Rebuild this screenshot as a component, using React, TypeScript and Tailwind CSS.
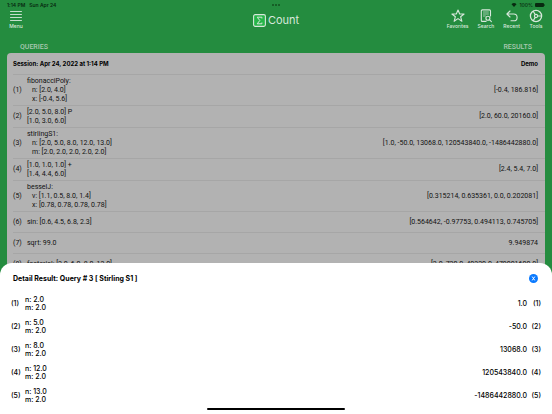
import type { ReactNode } from 'react'

type Query = { lines: string[]; indent?: boolean; result: string }

const queries: Query[] = [
  { lines: ['fibonacciPoly:', 'n: [2.0, 4.0]', 'x: [-0.4, 5.6]'], indent: true, result: '[-0.4, 186.816]' },
  { lines: ['[2.0, 5.0, 8.0] P', '[1.0, 3.0, 6.0]'], result: '[2.0, 60.0, 20160.0]' },
  {
    lines: ['stirlingS1:', 'n: [2.0, 5.0, 8.0, 12.0, 13.0]', 'm: [2.0, 2.0, 2.0, 2.0, 2.0]'],
    indent: true,
    result: '[1.0, -50.0, 13068.0, 120543840.0, -1486442880.0]',
  },
  { lines: ['[1.0, 1.0, 1.0] +', '[1.4, 4.4, 6.0]'], result: '[2.4, 5.4, 7.0]' },
  {
    lines: ['besselJ:', 'v: [1.1, 0.5, 8.0, 1.4]', 'x: [0.78, 0.78, 0.78, 0.78]'],
    indent: true,
    result: '[0.315214, 0.635361, 0.0, 0.202081]',
  },
  { lines: ['sin: [0.6, 4.5, 6.8, 2.3]'], result: '[0.564642, -0.97753, 0.494113, 0.745705]' },
  { lines: ['sqrt: 99.0'], result: '9.949874' },
  { lines: ['factorial: [2.0, 6.0, 8.0, 12.0]'], result: '[2.0, 720.0, 40320.0, 479001600.0]' },
]

const details = [
  { n: '2.0', m: '2.0', value: '1.0' },
  { n: '5.0', m: '2.0', value: '-50.0' },
  { n: '8.0', m: '2.0', value: '13068.0' },
  { n: '12.0', m: '2.0', value: '120543840.0' },
  { n: '13.0', m: '2.0', value: '-1486442880.0' },
]

function Icon({ children }: { children: ReactNode }) {
  return (
    <svg
      viewBox="0 0 14 14"
      className="size-[14px]"
      fill="none"
      stroke="currentColor"
      strokeWidth="1.1"
      strokeLinecap="round"
      strokeLinejoin="round"
      aria-hidden="true"
    >
      {children}
    </svg>
  )
}

function NavButton({ label, children }: { label: string; children: ReactNode }) {
  return (
    <button type="button" className="flex flex-col items-center text-[5px] leading-[6px] font-medium">
      {children}
      <span>{label}</span>
    </button>
  )
}

function StatusBar() {
  return (
    <div className="grid h-[9px] grid-cols-3 items-center px-[7px] pt-px text-[5px] leading-[8px] font-semibold text-[#082a10]">
      <div className="flex gap-1">
        <span>1:14 PM</span>
        <span>Sun Apr 24</span>
      </div>
      <div className="flex justify-center gap-px">
        <span className="size-[2px] rounded-full bg-[#12511f]" />
        <span className="size-[2px] rounded-full bg-[#12511f]" />
        <span className="size-[2px] rounded-full bg-[#12511f]" />
      </div>
      <div className="flex items-center justify-end gap-[2px]">
        <svg viewBox="0 0 10 8" className="h-[4px] w-[6px]" fill="currentColor" aria-hidden="true">
          <path d="M5 8 0 2.6C3-.6 7-.6 10 2.6Z" />
        </svg>
        <span className="font-medium">100%</span>
        <svg viewBox="0 0 20 8" className="h-[4px] w-[10px]" fill="currentColor" aria-hidden="true">
          <rect width="18" height="8" rx="2" />
          <rect x="18.6" y="2.5" width="1.4" height="3" rx=".7" />
        </svg>
      </div>
    </div>
  )
}

function NavBar() {
  return (
    <nav className="grid h-[30px] grid-cols-3 items-start px-[9px] text-[#d8e8dc]">
      <div className="flex">
        <NavButton label="Menu">
          <Icon>
            <path d="M1.5 2.5h11M1.5 5.5h11M1.5 8.5h11M1.5 11.5h11" strokeWidth=".9" />
          </Icon>
        </NavButton>
      </div>
      <h1 className="flex items-center justify-center gap-[2px] pt-1 text-[11px] leading-[14px]">
        <svg viewBox="0 0 13 13" className="size-[13px]" fill="none" stroke="currentColor" aria-hidden="true">
          <rect x=".6" y=".6" width="11.8" height="11.8" rx="1.6" fill="#25b548" strokeWidth="1.1" />
          <path d="M8.9 4.5V3.2H4.2l2.6 3.3-2.6 3.3h4.7V8.5" strokeWidth="1" />
        </svg>
        <span>Count</span>
      </h1>
      <div className="flex justify-end gap-[9px]">
        <NavButton label="Favorites">
          <Icon>
            <path d="m7 1 1.7 4h4.4L9.6 7.7l1.3 4.6L7 9.6l-3.9 2.7 1.3-4.6L.9 5h4.4Z" />
          </Icon>
        </NavButton>
        <NavButton label="Search">
          <Icon>
            <path d="M7 12.4H3.3a1 1 0 0 1-1-1V1.9a1 1 0 0 1 1-1h7.2a1 1 0 0 1 1 1v5" />
            <path d="M4.4 3h5M4.4 5h5M4.4 7h2" strokeWidth=".7" />
            <circle cx="8.9" cy="9.2" r="2" />
            <path d="m10.4 10.7 2 2" />
          </Icon>
        </NavButton>
        <NavButton label="Recent">
          <Icon>
            <path d="M5 2 1.9 5 5 8M1.9 5h6.8a3.4 3.4 0 0 1 0 6.8H6" />
          </Icon>
        </NavButton>
        <NavButton label="Tools">
          <Icon>
            <circle cx="7" cy="7" r="5.6" strokeWidth="1.3" />
            <circle cx="7" cy="7" r="1.6" />
            <path d="M8.6 7h4M6.2 5.6 4.2 2.2M6.2 8.4l-2 3.4" />
          </Icon>
        </NavButton>
      </div>
    </nav>
  )
}

function QueryTable() {
  return (
    <div className="mx-[7px] rounded-t-[4px] bg-[#b2b2b2] pl-[6px] text-[#111]">
      <table className="w-full border-collapse text-[7px] leading-[9px]">
        <thead>
          <tr className="h-[21px] border-b border-[#a6a6a6] text-[6px] text-black">
            <th colSpan={2} className="p-0 text-left font-bold">
              Session: Apr 24, 2022 at 1:14 PM
            </th>
            <th className="py-0 pr-[7px] text-right font-bold">Demo</th>
          </tr>
        </thead>
        <tbody className="font-['Roboto','Liberation_Sans',sans-serif]">
          {queries.map((query, i) => (
            <tr key={i} className="h-[21px] border-b border-[#a6a6a6]">
              <td className="w-[14px] px-0 pt-[2px] pb-px">({i + 1})</td>
              <td className="px-0 pt-[2px] pb-px">
                {query.lines.map((line, j) => (
                  <div key={j} className={query.indent && j > 0 ? 'pl-[5px]' : undefined}>
                    {line}
                  </div>
                ))}
              </td>
              <td className="pt-[2px] pr-[7px] pb-px text-right">{query.result}</td>
            </tr>
          ))}
        </tbody>
      </table>
    </div>
  )
}

function DetailSheet() {
  return (
    <section
      role="dialog"
      aria-labelledby="detail-title"
      className="absolute inset-x-0 bottom-0 rounded-t-[12px] bg-white pt-[10px] text-black"
    >
      <header className="flex items-center justify-between pr-[14px] pl-[13px]">
        <h2 id="detail-title" className="text-[7px] leading-[11px] font-bold">
          Detail Result: Query # 3 [ Stirling S1 ]
        </h2>
        <button
          type="button"
          aria-label="Close"
          className="flex size-[9px] items-center justify-center rounded-full bg-[#0a7aff] text-white"
        >
          <svg viewBox="0 0 9 9" className="size-[9px]" stroke="currentColor" strokeWidth="1" aria-hidden="true">
            <path d="m3.2 2.6 2.6 3.8M5.8 2.6 3.2 6.4" />
          </svg>
        </button>
      </header>
      <ol className="mt-2 mb-px px-[11px] text-[7px] leading-[8px] font-medium">
        {details.map((detail, i) => (
          <li key={i} className="flex h-[23px] items-center">
            <span className="w-[14px]">({i + 1})</span>
            <div className="flex-1">
              <p>n: {detail.n}</p>
              <p>m: {detail.m}</p>
            </div>
            <span>{detail.value}</span>
            <span className="w-[14px] text-right">({i + 1})</span>
          </li>
        ))}
      </ol>
      <div className="mx-auto mb-1 h-[2px] w-1/4 rounded-full bg-black" />
    </section>
  )
}

export default function App() {
  return (
    <div className="relative h-screen overflow-hidden bg-[#248c3f] font-['Inter','Liberation_Sans',sans-serif]">
      <StatusBar />
      <NavBar />
      <main>
        <div className="flex h-[14px] items-center justify-between px-5 pt-px font-['Roboto','Liberation_Sans',sans-serif] text-[7px] leading-[10px] font-medium text-[#a9c9b0]">
          <span>QUERIES</span>
          <span>RESULTS</span>
        </div>
        <QueryTable />
      </main>
      <DetailSheet />
    </div>
  )
}
